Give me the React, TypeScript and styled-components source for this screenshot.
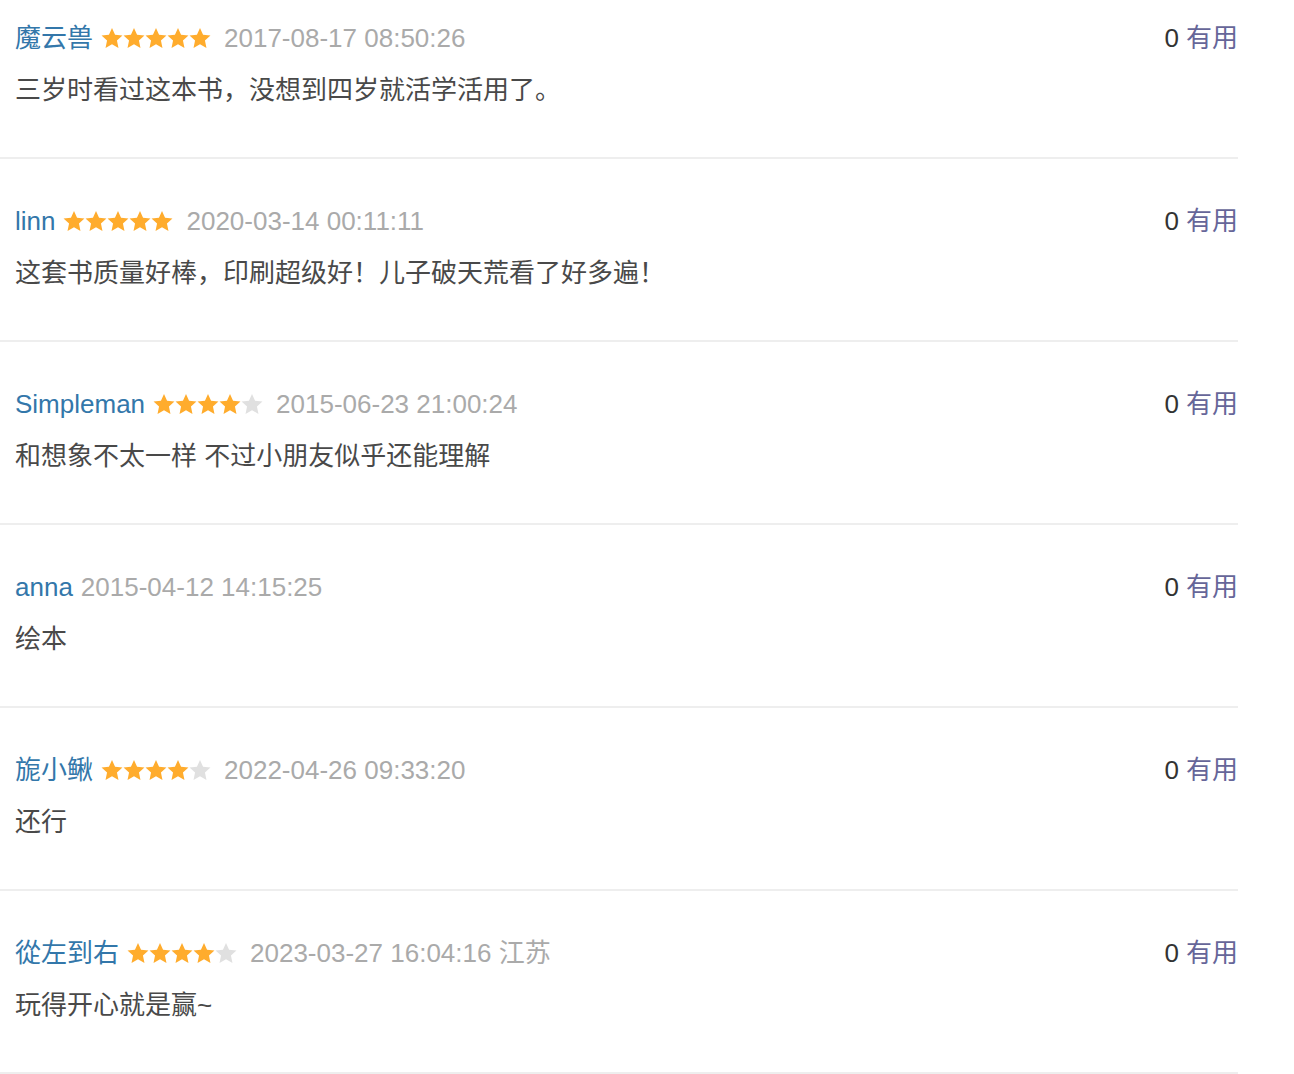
import { FC } from "react";
import styled, { createGlobalStyle } from "styled-components";

const GlobalStyle = createGlobalStyle`
  body {
    margin: 0;
    background: #fff;
    font-family: "Liberation Sans", "Noto Sans CJK SC", sans-serif;
  }
`;

const List = styled.ul({
  width: 1238,
  margin: 0,
  padding: 0,
  listStyle: "none",
});

const Item = styled.li({
  padding: "44px 0 49px 15px",
  borderBottom: "2px solid #eee",
  "&:first-child": {
    paddingTop: 20,
  },
});

const Header = styled.div({
  display: "flex",
  alignItems: "center",
  height: 36,
  fontSize: 26,
  lineHeight: "36px",
});

const Author = styled.a({
  color: "#3377aa",
  textDecoration: "none",
  marginRight: 8,
});

const Stars = styled.span({
  display: "inline-flex",
  marginRight: 13,
});

const Time = styled.span({
  color: "#aaa",
});

const Votes = styled.span({
  marginLeft: "auto",
  color: "#333",
});

const Useful = styled.a({
  color: "#666699",
  textDecoration: "none",
  marginLeft: 7,
});

const Comment = styled.p({
  margin: "16px 0 0",
  fontSize: 26,
  lineHeight: "36px",
  color: "#494949",
});

const Star: FC<{ on: boolean }> = ({ on }) => (
  <svg width="22" height="22" viewBox="0 0 22 22">
    <polygon
      fill={on ? "#ffac2d" : "#e0e0e0"}
      points="11,1 14.06,7.79 21.46,8.6 15.95,13.61 17.47,20.9 11,17.2 4.53,20.9 6.05,13.61 0.54,8.6 7.94,7.79"
    />
  </svg>
);

type Review = {
  author: string;
  rating?: number;
  time: string;
  place?: string;
  text: string;
};

const reviews: Review[] = [
  {
    author: "魔云兽",
    rating: 5,
    time: "2017-08-17 08:50:26",
    text: "三岁时看过这本书，没想到四岁就活学活用了。",
  },
  {
    author: "linn",
    rating: 5,
    time: "2020-03-14 00:11:11",
    text: "这套书质量好棒，印刷超级好！儿子破天荒看了好多遍！",
  },
  {
    author: "Simpleman",
    rating: 4,
    time: "2015-06-23 21:00:24",
    text: "和想象不太一样 不过小朋友似乎还能理解",
  },
  {
    author: "anna",
    time: "2015-04-12 14:15:25",
    text: "绘本",
  },
  {
    author: "旎小鳅",
    rating: 4,
    time: "2022-04-26 09:33:20",
    text: "还行",
  },
  {
    author: "從左到右",
    rating: 4,
    time: "2023-03-27 16:04:16",
    place: "江苏",
    text: "玩得开心就是赢~",
  },
];

const App: FC = () => (
  <>
    <GlobalStyle />
    <List>
      {reviews.map((r) => (
        <Item key={r.author}>
          <Header>
            <Author href="#">{r.author}</Author>
            {r.rating !== undefined && (
              <Stars>
                {[1, 2, 3, 4, 5].map((n) => (
                  <Star key={n} on={n <= r.rating!} />
                ))}
              </Stars>
            )}
            <Time>
              {r.time}
              {r.place && ` ${r.place}`}
            </Time>
            <Votes>
              0<Useful href="#">有用</Useful>
            </Votes>
          </Header>
          <Comment>{r.text}</Comment>
        </Item>
      ))}
    </List>
  </>
);

export default App;
